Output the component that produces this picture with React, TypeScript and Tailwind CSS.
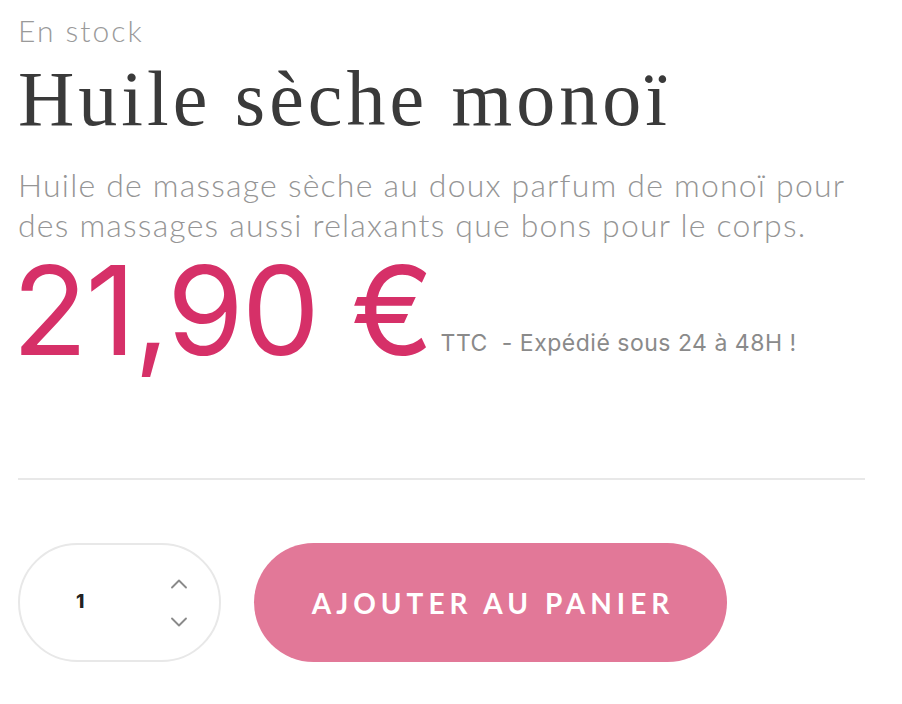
import { ChevronUp, ChevronDown } from "lucide-react";

export default function App() {
  return (
    <div className="w-[902px] h-[704px] bg-white overflow-hidden">
      <div className="pl-[18px] pr-[37px] pt-[10px]">
        {/* Stock */}
        <p className="text-[30px] leading-[40px] font-light tracking-[2px] text-[#9a9a9a] font-['Lato',sans-serif]">
          En stock
        </p>

        {/* Title */}
        <h1 className="mt-[4px] text-[78px] leading-[90px] tracking-[4px] text-[#3a3a3a] font-['Liberation_Serif',serif]">
          Huile sèche monoï
        </h1>

        {/* Description */}
        <p className="mt-[21px] w-[850px] text-[32px] leading-[40px] font-light tracking-[1.2px] text-[#959595] font-['Lato',sans-serif]">
          Huile de massage sèche au doux parfum de monoï pour des massages aussi relaxants que bons pour le corps.
        </p>

        {/* Price */}
        <div className="flex items-end font-['Inter',sans-serif]">
          <span className="-ml-[6px] text-[124px] leading-[130px] text-[#d63068] tracking-[-2px]">21,90 €</span>
          <span className="mb-[15px] ml-[9px] text-[23px] tracking-[0.5px] text-[#8a8a8a]">TTC&nbsp; - Expédié sous 24 à 48H !</span>
        </div>

        {/* Divider */}
        <div className="mt-[103px] h-[2px] bg-[#e8e8e8]" />

        {/* Cart */}
        <div className="mt-[63px] flex items-center gap-[33px]">
          <div className="w-[203px] h-[119px] rounded-full border-2 border-[#e8e8e8] flex items-center justify-between pl-[56px] pr-[26px]">
            <span className="text-[19px] font-extrabold text-[#222] font-['Inter',sans-serif]">1</span>
            <div className="flex flex-col items-center gap-[10px] text-[#8a8a8a]">
              <ChevronUp size={28} strokeWidth={1.6} />
              <ChevronDown size={28} strokeWidth={1.6} />
            </div>
          </div>
          <button className="w-[473px] h-[119px] pl-[5px] rounded-full bg-[#e27898] text-white text-[28px] font-bold tracking-[5px] font-['Lato',sans-serif]">
            AJOUTER AU PANIER
          </button>
        </div>
      </div>
    </div>
  );
}
